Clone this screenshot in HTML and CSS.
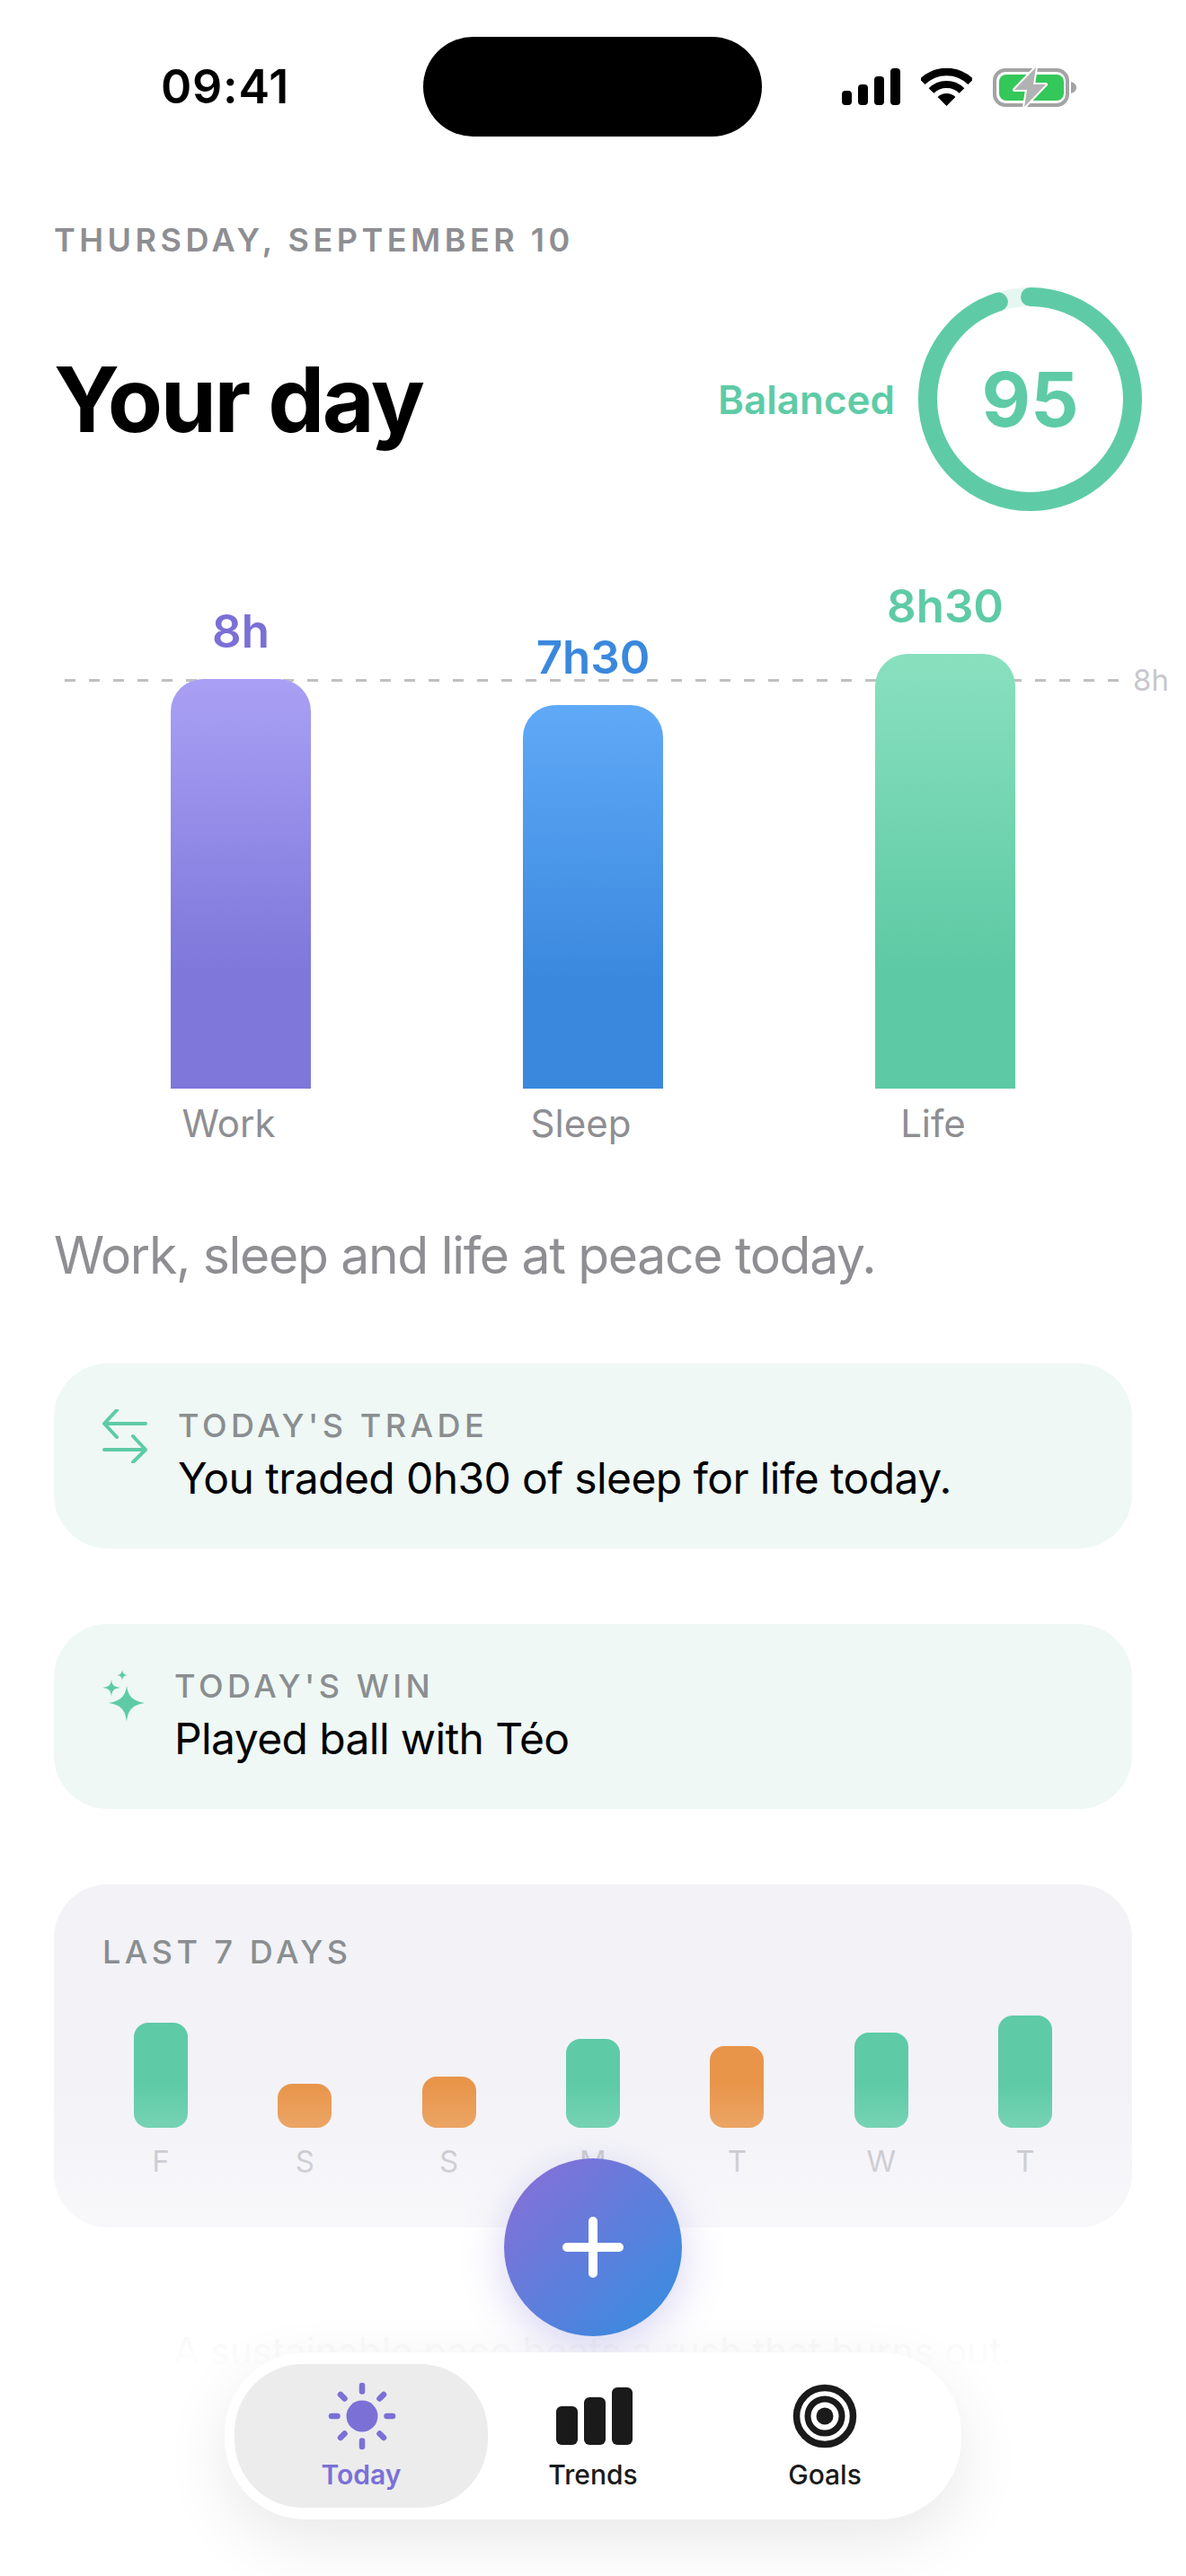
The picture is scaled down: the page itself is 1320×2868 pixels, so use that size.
FILE: index.html
```html
<!DOCTYPE html>
<html lang="en">
<head>
    <meta charset="UTF-8">
    <title>Your day</title>
    <link rel="stylesheet" href="styles.css">
</head>
<body>
<div class="screen">
    <!-- Status bar -->
    <div class="status-bar">
        <div class="status-time">09:41</div>
        <div class="island"></div>
        <div class="status-icons">
            <svg class="icon-signal" viewBox="0 0 65 41" width="65" height="41">
                <rect x="0" y="25" width="11" height="16" rx="4"/>
                <rect x="18" y="18" width="11" height="23" rx="4"/>
                <rect x="36" y="9" width="11" height="32" rx="4"/>
                <rect x="54" y="0" width="11" height="41" rx="4"/>
            </svg>
            <svg class="icon-wifi" viewBox="0 0 57 42" width="57" height="42">
                <path d="M1.6 15.1A38 38 0 0 1 55.4 15.1" fill="none" stroke="#000" stroke-width="8.4"/>
                <path d="M11.5 25A24 24 0 0 1 45.5 25" fill="none" stroke="#000" stroke-width="8"/>
                <path d="M28.5 42L18.6 32.1A14 14 0 0 1 38.4 32.1Z"/>
            </svg>
            <svg class="icon-battery" viewBox="0 0 94 46" width="94" height="46">
                <rect x="2" y="4" width="81" height="39" rx="12" fill="none" stroke="#a3a3a3" stroke-width="4"/>
                <rect x="7" y="9" width="72" height="29" rx="8" fill="#34c759"/>
                <path d="M87 17c4 1 6 3.500 6 6.500s-2 5.500-6 6.500z" fill="#a3a3a3"/>
                <path d="M48 1L24 26H38L35 45L59 20H45Z" fill="#b2b2b2" stroke="#fff" stroke-width="4" stroke-linejoin="round" paint-order="stroke"/>
            </svg>
        </div>
    </div>

    <div class="content">
        <div class="date-line">THURSDAY, SEPTEMBER 10</div>

        <div class="title-row">
            <h1>Your day</h1>
            <div class="score">
                <span class="score-label">Balanced</span>
                <div class="score-ring">
                    <svg viewBox="0 0 249 249" width="249" height="249">
                        <circle cx="124.500" cy="124.500" r="114" fill="none" stroke="#e6f7f1" stroke-width="21"/>
                        <circle cx="124.500" cy="124.500" r="114" fill="none" stroke="#5ecba6" stroke-width="21" stroke-linecap="round" pathLength="100" stroke-dasharray="95 100" transform="rotate(-90 124.500 124.500)"/>
                    </svg>
                    <span class="score-value">95</span>
                </div>
            </div>
        </div>

        <!-- Gráfico principal -->
        <div class="chart">
            <div class="chart-line"></div>
            <span class="chart-line-label">8h</span>
            <div class="chart-col">
                <span class="chart-value work">8h</span>
                <div class="chart-bar bar-work" style="height: 456px"></div>
            </div>
            <div class="chart-col">
                <span class="chart-value sleep">7h30</span>
                <div class="chart-bar bar-sleep" style="height: 427px"></div>
            </div>
            <div class="chart-col">
                <span class="chart-value life">8h30</span>
                <div class="chart-bar bar-life" style="height: 484px"></div>
            </div>
        </div>
        <div class="chart-labels">
            <span>Work</span>
            <span>Sleep</span>
            <span>Life</span>
        </div>

        <p class="summary">Work, sleep and life at peace today.</p>

        <div class="card">
            <svg class="card-icon icon-trade" viewBox="0 0 50 60" width="50" height="60">
                <path d="M48 16H2M16 1L2 16L16 31M2 45H48M34 30L48 45L34 59" fill="none" stroke="#5ecba6" stroke-width="4" stroke-linecap="round" stroke-linejoin="round"/>
            </svg>
            <div>
                <div class="small-title">TODAY'S TRADE</div>
                <div class="card-text">You traded 0h30 of sleep for life today.</div>
            </div>
        </div>

        <div class="card">
            <svg class="card-icon icon-win" viewBox="0 0 48 58" width="48" height="58">
                <path d="M27 18C28.500 29 33 34.500 47 37C33 39.500 28.500 45 27 58C25.500 45 21 39.500 7 37C21 34.500 25.500 29 27 18Z" fill="#5ecba6"/>
                <path d="M10 11C10.700 17 12.500 19 20 20C12.500 21 10.700 23 10 30C9.300 23 7.500 21 0 20C7.500 19 9.300 17 10 11Z" fill="#5ecba6"/>
                <path d="M22 0C22.500 4 24 5.500 28 6C24 6.500 22.500 8 22 12C21.500 8 20 6.500 16 6C20 5.500 21.500 4 22 0Z" fill="#5ecba6"/>
            </svg>
            <div>
                <div class="small-title">TODAY'S WIN</div>
                <div class="card-text">Played ball with Téo</div>
            </div>
        </div>

        <div class="week-card">
            <div class="small-title">LAST 7 DAYS</div>
            <div class="week-bars">
                <div class="week-col"><div class="week-bar good" style="height: 117px"></div></div>
                <div class="week-col"><div class="week-bar low" style="height: 49px"></div></div>
                <div class="week-col"><div class="week-bar low" style="height: 57px"></div></div>
                <div class="week-col"><div class="week-bar good" style="height: 99px"></div></div>
                <div class="week-col"><div class="week-bar low" style="height: 91px"></div></div>
                <div class="week-col"><div class="week-bar good" style="height: 106px"></div></div>
                <div class="week-col"><div class="week-bar good" style="height: 125px"></div></div>
            </div>
            <div class="week-days">
                <span>F</span><span>S</span><span>S</span><span>M</span><span>T</span><span>W</span><span>T</span>
            </div>
        </div>

        <p class="quote">A sustainable pace beats a rush that burns out.</p>
    </div>

    <div class="bottom-fade"></div>

    <div class="add-button">
        <svg viewBox="0 0 68 68" width="68" height="68">
            <path d="M34 5V63M5 34H63" fill="none" stroke="#fff" stroke-width="10" stroke-linecap="round"/>
        </svg>
    </div>

    <!-- Navegação -->
    <nav class="tab-bar">
        <div class="tab active">
            <svg viewBox="0 0 80 80" width="80" height="80">
                <circle cx="41" cy="40" r="17.500" fill="#7a70d6"/>
                <path d="M41 6V12.500M41 67.500V74M7 40H13.500M68.500 40H75M17 16L21.500 20.500M60.500 59.500L65 64M17 64L21.500 59.500M60.500 20.500L65 16" fill="none" stroke="#7a70d6" stroke-width="6.500" stroke-linecap="round"/>
            </svg>
            <span>Today</span>
        </div>
        <div class="tab">
            <svg viewBox="-3 0 88 80" width="88" height="80">
                <rect x="0" y="29" width="24" height="43" rx="6" fill="#1a1a1a"/>
                <rect x="31" y="19" width="24" height="53" rx="6" fill="#1a1a1a"/>
                <rect x="62" y="8" width="23" height="64" rx="6" fill="#1a1a1a"/>
            </svg>
            <span>Trends</span>
        </div>
        <div class="tab">
            <svg viewBox="0 0 80 80" width="80" height="80">
                <circle cx="40" cy="40" r="31.500" fill="none" stroke="#1a1a1a" stroke-width="7.500"/>
                <circle cx="40" cy="40" r="19" fill="none" stroke="#1a1a1a" stroke-width="7"/>
                <circle cx="40" cy="40" r="9.500" fill="#1a1a1a"/>
            </svg>
            <span>Goals</span>
        </div>
    </nav>
</div>
</body>
</html>
```

FILE: styles.css
```css
body {
    margin: 0;
    background-color: white;
    font-family: Inter, "Liberation Sans", sans-serif;
}

.screen {
    position: relative;
    width: 1320px;
    height: 2868px;
    overflow: hidden;
    background-color: white;
}

/* Status bar */
.status-bar {
    display: grid;
    grid-template-columns: 471px 377px 1fr;
    align-items: center;
    height: 111px;
    padding-top: 41px;
}

.status-time {
    font-size: 52px;
    font-weight: 600;
    letter-spacing: 0.8px;
    text-align: center;
    padding-left: 30px;
    color: black;
}

.island {
    height: 111px;
    background-color: black;
    border-radius: 56px;
}

.status-icons {
    display: flex;
    align-items: center;
    margin-left: 89px;
}

.icon-signal {
    margin-right: 23px;
}

.icon-wifi {
    margin-right: 23px;
}

.content {
    padding: 0 60px;
}

.date-line {
    margin-top: 93px;
    font-size: 36px;
    line-height: 44px;
    font-weight: 600;
    letter-spacing: 4.5px;
    color: #8e8e93;
}

.title-row {
    display: flex;
    align-items: center;
    justify-content: space-between;
    height: 249px;
    margin-top: 31px;
    margin-right: -11px;
}

h1 {
    margin: 0;
    font-size: 100px;
    font-weight: 700;
    letter-spacing: -2.4px;
    color: black;
}

.score {
    display: flex;
    align-items: center;
    gap: 26px;
}

.score-label {
    font-size: 44px;
    font-weight: 600;
    color: #5ecba6;
}

.score-ring {
    position: relative;
    width: 249px;
    height: 249px;
}

.score-ring svg {
    display: block;
}

.score-value {
    position: absolute;
    inset: 0;
    display: flex;
    align-items: center;
    justify-content: center;
    font-size: 84px;
    font-weight: 700;
    color: #5ecba6;
}

/* Main chart */
.chart {
    position: relative;
    display: grid;
    grid-template-columns: repeat(3, 392px);
    align-items: end;
    height: 573px;
    margin: 70px 12px 0;
}

.chart-line {
    position: absolute;
    left: 0;
    right: 2px;
    top: 117px;
    height: 3px;
    background: repeating-linear-gradient(90deg, #c0c0c0 0 12px, transparent 12px 27px);
}

.chart-line-label {
    position: absolute;
    left: 1189px;
    top: 98px;
    font-size: 33px;
    line-height: 40px;
    color: #c7c7cc;
}

.chart-col {
    position: relative;
    display: flex;
    flex-direction: column;
    align-items: center;
}

.chart-value {
    font-size: 51px;
    line-height: 56px;
    font-weight: 600;
    margin-bottom: 25px;
}

.chart-value.work {
    color: #7a70d6;
}

.chart-value.sleep {
    color: #3a88de;
}

.chart-value.life {
    color: #5ecba6;
}

.chart-bar {
    width: 156px;
    border-radius: 36px 36px 0 0;
}

.bar-work {
    background: linear-gradient(180deg, #a9a0f5 0%, #7f77da 72%);
}

.bar-sleep {
    background: linear-gradient(180deg, #60a9f7 0%, #3a88de 72%);
}

.bar-life {
    background: linear-gradient(180deg, #89e0bf 0%, #5ecaa5 72%);
}

.chart-labels {
    display: grid;
    grid-template-columns: repeat(3, 392px);
    margin: 14px 12px 0;
    font-size: 42px;
    line-height: 50px;
    color: #8e8e93;
}

.chart-labels span {
    text-align: center;
    padding-right: 27px;
}

.summary {
    margin: 90px 0 0;
    font-size: 57px;
    line-height: 64px;
    letter-spacing: -1.3px;
    color: #8e8e93;
}

/* Cards */
.card {
    display: flex;
    align-items: flex-start;
    gap: 32px;
    height: 206px;
    box-sizing: border-box;
    margin-top: 84px;
    padding: 48px 54px 0;
    background-color: #eff8f5;
    border-radius: 60px;
}

.summary + .card {
    margin-top: 88px;
}

.icon-trade {
    flex-shrink: 0;
    margin-top: 3px;
    margin-right: 2px;
}

.icon-win {
    flex-shrink: 0;
    margin-top: 3px;
}

.small-title {
    font-size: 36px;
    line-height: 42px;
    font-weight: 500;
    letter-spacing: 4.5px;
    color: #8a8e90;
}

.card-text {
    margin-top: 9px;
    font-size: 48px;
    line-height: 58px;
    letter-spacing: -0.6px;
    color: black;
}

/* Last 7 days */
.week-card {
    height: 382px;
    box-sizing: border-box;
    margin-top: 84px;
    padding: 54px 54px 0;
    background-color: #f2f2f7;
    border-radius: 60px;
}

.week-bars {
    display: flex;
    justify-content: space-between;
    align-items: flex-end;
    height: 175px;
}

.week-col {
    display: flex;
    justify-content: center;
    width: 130px;
}

.week-bar {
    width: 60px;
    border-radius: 16px;
}

.week-bar.good {
    background-color: #5ecba6;
}

.week-bar.low {
    background-color: #e8954a;
}

.week-days {
    display: flex;
    justify-content: space-between;
    margin-top: 17px;
    font-size: 33px;
    line-height: 40px;
    color: #bcbcc2;
}

.week-days span {
    width: 130px;
    text-align: center;
}

.quote {
    margin: 108px 0 0;
    font-size: 42px;
    line-height: 60px;
    text-align: center;
    color: #c7c7cc;
}

.bottom-fade {
    position: absolute;
    left: 0;
    right: 0;
    top: 2320px;
    bottom: 0;
    background: linear-gradient(180deg, rgba(255, 255, 255, 0) 0, #fff 320px);
}

.add-button {
    position: absolute;
    left: 561px;
    top: 2403px;
    display: flex;
    align-items: center;
    justify-content: center;
    width: 198px;
    height: 198px;
    border-radius: 50%;
    background: linear-gradient(135deg, #7f72d8 14%, #3f8ae0 86%);
    box-shadow: 0 12px 48px rgba(122, 112, 214, 0.3);
}

/* Tab bar */
.tab-bar {
    position: absolute;
    left: 250px;
    top: 2619px;
    display: grid;
    grid-template-columns: repeat(3, 258px);
    justify-content: center;
    width: 820px;
    height: 186px;
    box-sizing: border-box;
    padding-top: 13px;
    background-color: white;
    border-radius: 90px;
    box-shadow: 0 24px 72px rgba(0, 0, 0, 0.09);
}

.tab {
    display: flex;
    flex-direction: column;
    align-items: center;
    height: 160px;
    box-sizing: border-box;
    padding-top: 18px;
    font-size: 30px;
    line-height: 50px;
    font-weight: 500;
    color: #1a1a1a;
}

.tab svg {
    display: block;
}

.tab.active {
    margin: 0 -12px;
    background-color: #ececec;
    border-radius: 76px;
    font-weight: 600;
    color: #7a70d6;
}
```
